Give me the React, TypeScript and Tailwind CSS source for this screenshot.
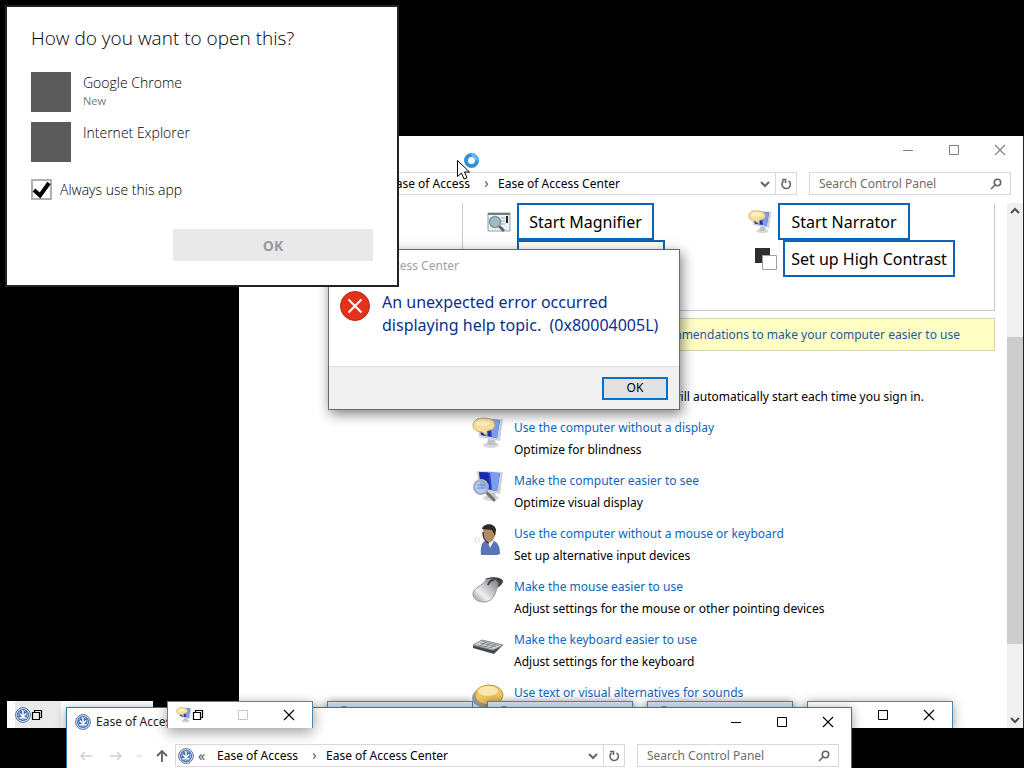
import type { ReactNode } from "react";

type SettingItem = {
  title: string;
  description: string;
  icon: ReactNode;
};

const EaseIcon = ({ className = "size-4" }: { className?: string }) => (
  <svg viewBox="0 0 16 16" className={className}>
    <circle cx="8" cy="8" r="7.4" fill="#dce7f5" stroke="#5b6f94" />
    <circle cx="8" cy="8" r="6" fill="#3c68b0" />
    <circle cx="8" cy="8" r="4.6" fill="none" stroke="#c8d9f2" strokeWidth="1" strokeDasharray="2 1.2" />
    <path d="M8 3.500v5.500M4.800 6.500L8 9.800l3.200-3.300M4.500 10.800h7" fill="none" stroke="#fff" strokeWidth="1.5" />
  </svg>
);

const MonitorBase = () => (
  <>
    <ellipse cx="19" cy="28" rx="8" ry="3" fill="#d6d8db" />
    <path d="M16 22l7 1 1 5h-9z" fill="#bfc3c8" />
    <path d="M5 1l26 1-3 22L7 20z" fill="#ccd2dc" />
    <path d="M7 2l21 1-3 18L9 18z" fill="#2440cc" />
    <path d="M18 2.500l10 .500-3 18-5-1z" fill="#7c9cf0" />
    <path d="M7 2l9 .500 2 17L9 18z" fill="#14239c" opacity=".7" />
  </>
);

const NarratorIcon = ({ className = "size-8" }: { className?: string }) => (
  <svg viewBox="0 0 32 32" className={className}>
    <MonitorBase />
    <path d="M12 1C5 1 1 4 1 8s4 7 9 7l5 4v-5c5-1 8-3 8-6 0-4-4-7-11-7z" fill="#f7df9c" stroke="#c9a656" />
    <ellipse cx="11" cy="6" rx="7" ry="3" fill="#fdf1c4" />
  </svg>
);

const SeeIcon = () => (
  <svg viewBox="0 0 32 32" className="size-8">
    <MonitorBase />
    <path d="M14 22l8 8" stroke="#77706c" strokeWidth="3" strokeLinecap="round" />
    <circle cx="9" cy="17" r="7" fill="#a9c3f2" fillOpacity=".85" stroke="#a6aebb" strokeWidth="2" />
    <path d="M5 15h8M5 18h7" stroke="#6d8fd0" />
  </svg>
);

const PersonIcon = () => (
  <svg viewBox="0 0 32 32" className="size-8">
    <path d="M9 32c-1-9 1-15 8-15 7 0 11 4 11 14-4 2-14 2-19 1z" fill="#5876b5" />
    <path d="M15 17l3 8 4-7z" fill="#e8edf5" />
    <path d="M11 5c2-4 11-4 12 1 1 6-1 12-5 13-5 0-7-7-7-14z" fill="#b08a62" />
    <path d="M10 6c1-6 13-7 14 1l-1 6-3-6z" fill="#302822" />
    <path d="M11 9c0 5 2 10 6 11" fill="none" stroke="#3f3a36" strokeWidth="1.6" />
    <path d="M8 15c-2 1-2 3 0 4M5 14c-2 2-2 4 0 6" fill="none" stroke="#c9c9c9" />
  </svg>
);

const MouseIcon = () => (
  <svg viewBox="0 0 32 32" className="size-8">
    <defs>
      <linearGradient id="mouse-body" x1="0" y1="1" x2="1" y2="0">
        <stop offset="0" stopColor="#8b8e91" />
        <stop offset=".35" stopColor="#f0f1f2" />
        <stop offset="1" stopColor="#77797c" />
      </linearGradient>
    </defs>
    <path d="M13 3c6-3 17-2 18 2 0 3-3 5-6 7z" fill="#3f4245" />
    <path d="M1 18c0-6 9-8 13-14 5-2 12 0 12 4-2 8-4 18-14 18C6 26 1 23 1 18z" fill="url(#mouse-body)" stroke="#96999c" />
    <path d="M16 9c1-3 3-5 6-5" fill="none" stroke="#3e4144" strokeWidth="2" />
  </svg>
);

const KeyboardIcon = () => (
  <svg viewBox="0 0 32 32" className="size-8">
    <path d="M1 16l9-5 21 5-9 9L1 19z" fill="#45484b" />
    <path d="M1 16l9-5 21 5-10 5z" fill="#d4d6d8" stroke="#8d9093" />
    <path d="M5 16l16 3M8 14l16 3.500M10 12.500l17 4M8 17l6-4M13 18l6-4M18 19l6-4" stroke="#7b7e81" strokeWidth=".8" />
  </svg>
);

const SoundIcon = () => (
  <svg viewBox="0 0 32 32" className="size-8">
    <ellipse cx="14" cy="16" rx="14" ry="10" fill="#9aa3b0" />
    <ellipse cx="17" cy="13" rx="14" ry="10" fill="#efc765" stroke="#bd9544" />
    <ellipse cx="16" cy="9" rx="10" ry="5" fill="#fae9ae" />
  </svg>
);

const MagnifierIcon = () => (
  <svg viewBox="0 0 24 22" className="h-[22px] w-6">
    <path d="M1 2h22v18H1z" fill="#eef3f5" stroke="#93a0a5" />
    <path d="M1 3h22" stroke="#6f7d83" strokeWidth="2" />
    <path d="M14 7h4M14 10h4M14 13h4" stroke="#9aa8ae" />
    <path d="M20 5v7" stroke="#222" strokeWidth="2" />
    <path d="M11 14l6 6" stroke="#5e6a6f" strokeWidth="3" />
    <circle cx="8" cy="11" r="5.500" fill="#9fbcc4" stroke="#84959b" strokeWidth="1.500" />
  </svg>
);

const ContrastIcon = () => (
  <svg viewBox="0 0 22 22" className="size-[22px]">
    <path d="M0 0h15v15H0z" fill="#2e2e2e" />
    <path d="M7.500 7.500h14v14h-14z" fill="#fff" stroke="#a0a0a0" />
  </svg>
);

const MinimizeGlyph = () => (
  <svg viewBox="0 0 12 12" className="size-3" stroke="currentColor">
    <path d="M1 6.500h10" />
  </svg>
);

const MaximizeGlyph = () => (
  <svg viewBox="0 0 12 12" className="size-3" fill="none" stroke="currentColor">
    <path d="M1.500 1.500h9v9h-9z" />
  </svg>
);

const CloseGlyph = () => (
  <svg viewBox="0 0 12 12" className="size-3" stroke="currentColor" strokeWidth="1.100">
    <path d="M1 1l10 10M11 1L1 11" />
  </svg>
);

const RestoreGlyph = () => (
  <svg viewBox="0 0 12 12" className="size-3" fill="none" stroke="currentColor" strokeWidth="1.200">
    <path d="M1.500 3.500h7v7h-7zM3.500 3.500v-2h7v7h-2" />
  </svg>
);

const ChevronDown = () => (
  <svg viewBox="0 0 10 10" className="size-[10px]" fill="none" stroke="currentColor" strokeWidth="2">
    <path d="M1 3l4 4 4-4" />
  </svg>
);

const WindowButtons = ({ tone }: { tone: string }) => (
  <div className={`flex ${tone}`}>
    <button type="button" aria-label="Minimize" className="flex h-7 w-[46px] items-center justify-center">
      <MinimizeGlyph />
    </button>
    <button type="button" aria-label="Maximize" className="flex h-7 w-[46px] items-center justify-center">
      <MaximizeGlyph />
    </button>
    <button type="button" aria-label="Close" className="flex h-7 w-[46px] items-center justify-center">
      <CloseGlyph />
    </button>
  </div>
);

const AddressBar = () => (
  <div className="flex h-[23px] min-w-0 flex-1 items-center border border-[#d9d9d9] bg-white text-[12px] text-black">
    <EaseIcon className="ml-[2px] size-4 shrink-0" />
    <span className="ml-1 w-[19px] text-[14px] text-[#555]">«</span>
    <a href="#ease" className="w-[86px] whitespace-nowrap">Ease of Access</a>
    <span className="w-[23px] pb-px text-center text-[14px] leading-4 text-[#555]">›</span>
    <a href="#center" className="flex-1 whitespace-nowrap">Ease of Access Center</a>
    <button type="button" aria-label="Recent locations" className="flex w-5 justify-center text-[#666]">
      <ChevronDown />
    </button>
    <button
      type="button"
      aria-label="Refresh"
      className="flex h-full w-[21px] items-center justify-center border-l border-[#d9d9d9] text-[#666]"
    >
      <svg viewBox="0 0 12 12" className="size-3" fill="none" stroke="currentColor" strokeWidth="1.600">
        <path d="M8.500 2.800A4.200 4.200 0 1 1 3.600 3M2 1.500h3.500V5" />
      </svg>
    </button>
  </div>
);

const SearchBox = () => (
  <label className="flex h-[23px] w-[202px] shrink-0 items-center border border-[#d9d9d9] bg-white pr-2 pl-[9px]">
    <input
      type="text"
      aria-label="Search Control Panel"
      placeholder="Search Control Panel"
      className="min-w-0 flex-1 bg-transparent text-[12px] outline-none placeholder:text-[#6d6d6d]"
    />
    <svg viewBox="0 0 12 12" className="size-3 shrink-0" fill="none" stroke="#666" strokeWidth="1.600">
      <circle cx="7.500" cy="4.500" r="3.200" />
      <path d="M5 7L1 11" />
    </svg>
  </label>
);

const settings: SettingItem[] = [
  {
    title: "Use the computer without a display",
    description: "Optimize for blindness",
    icon: <NarratorIcon />,
  },
  {
    title: "Make the computer easier to see",
    description: "Optimize visual display",
    icon: <SeeIcon />,
  },
  {
    title: "Use the computer without a mouse or keyboard",
    description: "Set up alternative input devices",
    icon: <PersonIcon />,
  },
  {
    title: "Make the mouse easier to use",
    description: "Adjust settings for the mouse or other pointing devices",
    icon: <MouseIcon />,
  },
  {
    title: "Make the keyboard easier to use",
    description: "Adjust settings for the keyboard",
    icon: <KeyboardIcon />,
  },
  {
    title: "Use text or visual alternatives for sounds",
    description: "Set up alternatives for sounds",
    icon: <SoundIcon />,
  },
];

const QUICK_BUTTON =
  "flex h-[37px] items-center justify-center whitespace-nowrap border-2 border-[#0a63b8] bg-white text-[16px] text-black";

const ControlPanelWindow = () => (
  <section className="absolute top-[136px] right-0 bottom-10 left-[239px] flex flex-col overflow-hidden border-r border-[#222] bg-white">
    <header className="flex h-9 shrink-0 justify-end">
      <WindowButtons tone="text-[#808080]" />
    </header>
    <div className="flex shrink-0 gap-3 pr-3 pl-[108px]">
      <AddressBar />
      <SearchBox />
    </div>
    <div className="mt-2 flex min-h-0 flex-1">
      <div className="w-[223px] shrink-0" />
      <main className="min-w-0 flex-1 pr-3">
        <div className="flex h-[108px] border-x border-b border-[#c8c8c8] pl-6">
          <div className="w-[261px]">
            <div className="flex items-center gap-[6px]">
              <MagnifierIcon />
              <button type="button" className={`${QUICK_BUTTON} w-[137px]`}>Start Magnifier</button>
            </div>
            <div className="flex pl-[30px]">
              <button type="button" className={`${QUICK_BUTTON} w-[148px]`}>Start Keyboard</button>
            </div>
          </div>
          <div>
            <div className="flex items-center gap-[6px]">
              <NarratorIcon className="size-6" />
              <button type="button" className={`${QUICK_BUTTON} w-[132px]`}>Start Narrator</button>
            </div>
            <div className="flex items-center gap-[6px] pl-[7px]">
              <ContrastIcon />
              <button type="button" className={`${QUICK_BUTTON} w-[172px]`}>Set up High Contrast</button>
            </div>
          </div>
        </div>
        <div className="mt-[7px] flex h-[33px] items-center justify-end border border-[#d5d5a8] bg-[#ffffc4] pr-[34px]">
          <a href="#recommendations" className="text-[12px] whitespace-nowrap text-[#1a5a9c]">
            Get recommendations to make your computer easier to use
          </a>
        </div>
        <p className="mt-9 pr-[71px] text-right text-[12px] leading-5 whitespace-nowrap text-black">
          When you select these settings, they will automatically start each time you sign in.
        </p>
        <ul className="mt-[10px] pl-[10px]">
          {settings.map((item) => (
            <li key={item.title} className="flex h-[53px] gap-[10px]">
              {item.icon}
              <div className="text-[12px] leading-[22px] whitespace-nowrap">
                <a href="#setting" className="block text-[#0b66c0]">{item.title}</a>
                <p className="text-black">{item.description}</p>
              </div>
            </li>
          ))}
        </ul>
      </main>
      <div className="flex w-4 shrink-0 flex-col bg-[#f0f0f0] text-[#505050]">
        <button type="button" aria-label="Scroll up" className="flex h-[17px] rotate-180 items-center justify-center">
          <ChevronDown />
        </button>
        <div className="flex flex-1 flex-col pt-[117px] pb-[67px]">
          <div className="flex-1 bg-[#cdcdcd]" />
        </div>
        <button type="button" aria-label="Scroll down" className="flex h-[17px] items-center justify-center">
          <ChevronDown />
        </button>
      </div>
    </div>
  </section>
);

const ErrorDialog = () => (
  <section
    role="alertdialog"
    className="absolute top-[249px] left-[328px] z-30 flex w-[352px] flex-col border border-[#6b6b6b] bg-white shadow-[2px_4px_12px_rgba(0,0,0,0.5)]"
  >
    <h2 className="h-[31px] pl-2 text-[12px] leading-[31px] text-[#a0a0a0]">Ease of Access Center</h2>
    <div className="flex h-[85px] gap-3 pt-[10px] pl-[11px]">
      <svg viewBox="0 0 30 30" className="size-[30px] shrink-0">
        <circle cx="15" cy="15" r="14.500" fill="#e2321a" stroke="#b32a17" />
        <path d="M8.500 8.500l13 13M21.500 8.500l-13 13" stroke="#fff" strokeWidth="2" />
      </svg>
      <p className="text-[16px] leading-[23px] whitespace-pre text-[#0b2f8c]">
        {"An unexpected error occurred\ndisplaying help topic.  (0x80004005L)"}
      </p>
    </div>
    <footer className="flex h-[43px] items-center justify-end border-t border-[#dfdfdf] bg-[#f0f0f0] pr-[11px]">
      <button type="button" className="h-[23px] w-[66px] border-2 border-[#0a70c8] bg-[#e1e1e1] text-[12px] leading-[18px] text-black">
        OK
      </button>
    </footer>
  </section>
);

const OpenWithDialog = () => (
  <section
    role="dialog"
    className="absolute top-[5px] left-[5px] z-40 w-[394px] border-2 border-[#222] bg-white px-6 pt-[15px] pb-6 font-['Open_Sans',sans-serif] text-black"
  >
    <h1 className="text-[19px] leading-8 font-light">How do you want to open this?</h1>
    <ul className="mt-[18px] flex flex-col gap-[10px]">
      <li>
        <button type="button" className="flex h-10 gap-3 text-left">
          <span className="size-10 bg-[#5a5a5a]" />
          <span>
            <span className="block text-[14px] leading-[22px] font-light">Google Chrome</span>
            <span className="block text-[11px] leading-[14px] text-[#777]">New</span>
          </span>
        </button>
      </li>
      <li>
        <button type="button" className="flex h-10 gap-3 text-left">
          <span className="size-10 bg-[#5a5a5a]" />
          <span className="text-[14px] leading-[22px] font-light">Internet Explorer</span>
        </button>
      </li>
    </ul>
    <label className="relative mt-[17px] flex h-[21px] items-center gap-2 text-[14px] font-light">
      <input type="checkbox" defaultChecked className="peer size-[21px] appearance-none border-2 border-[#b0b0b0] bg-white" />
      <svg viewBox="0 0 21 21" className="pointer-events-none invisible absolute left-0 size-[21px] peer-checked:visible" fill="none" stroke="#000" strokeWidth="4">
        <path d="M3 11l6 5.500L18 4" />
      </svg>
      Always use this app
    </label>
    <div className="mt-[29px] flex justify-end">
      <button type="button" disabled className="h-8 w-[200px] bg-[#e9e9e9] text-[14px] font-bold text-[#999]">
        OK
      </button>
    </div>
  </section>
);

const MINI = "relative flex h-[27px] w-[146px] border border-b-0 border-[#4d87b0]";

const MinimizedWindows = () => (
  <div className="absolute bottom-10 left-[7px] flex gap-[14px]">
    <div className="relative flex h-[27px] w-[146px] items-center bg-white">
      <div className="ml-2 flex h-full w-[46px] items-center bg-[#eaeaea]">
        <EaseIcon />
        <RestoreGlyph />
      </div>
    </div>
    <div className={`${MINI} z-20 items-center bg-white pl-2 shadow-[0_4px_14px_rgba(0,0,0,0.4)]`}>
      <NarratorIcon className="size-4" />
      <button type="button" aria-label="Restore"><RestoreGlyph /></button>
      <button type="button" disabled aria-label="Maximize" className="ml-[33px] text-[#c8c8c8]"><MaximizeGlyph /></button>
      <button type="button" aria-label="Close" className="ml-[34px]"><CloseGlyph /></button>
    </div>
    {[1, 2, 3].map((n) => (
      <div key={n} className={`${MINI} items-start bg-[#cfe0f0] pt-1 pl-2 shadow-[0_0_8px_rgba(0,0,0,0.4)]`}>
        <EaseIcon />
      </div>
    ))}
    <div className={`${MINI} items-center bg-white pl-2 shadow-[0_2px_12px_rgba(0,0,0,0.4)]`}>
      <EaseIcon />
      <button type="button" aria-label="Maximize" className="ml-[45px]"><MaximizeGlyph /></button>
      <button type="button" aria-label="Close" className="ml-[34px]"><CloseGlyph /></button>
    </div>
  </div>
);

const FrontWindow = () => (
  <section className="absolute right-[172px] bottom-0 left-[66px] z-10 h-[61px] border border-b-0 border-[#2c79ae] bg-white shadow-[0_2px_10px_rgba(0,0,0,0.4)]">
    <header className="flex h-9 justify-between">
      <div className="flex h-7 items-center gap-[5px] pl-2 text-[12px] text-[#222]">
        <EaseIcon />
        Ease of Access Center
      </div>
      <WindowButtons tone="text-black" />
    </header>
    <div className="flex pr-3">
      <nav className="flex h-[23px] w-[108px] shrink-0 items-center pl-3">
        <button type="button" aria-label="Back" className="w-[30px] text-[#d0d0d0]">
          <svg viewBox="0 0 14 12" className="h-3 w-[14px]" fill="none" stroke="currentColor" strokeWidth="1.500">
            <path d="M13 6H2M6 2L2 6l4 4" />
          </svg>
        </button>
        <button type="button" aria-label="Forward" className="w-[26px] text-[#d0d0d0]">
          <svg viewBox="0 0 14 12" className="h-3 w-[14px]" fill="none" stroke="currentColor" strokeWidth="1.500">
            <path d="M1 6h11M8 2l4 4-4 4" />
          </svg>
        </button>
        <button type="button" aria-label="History" className="w-5 text-[#d0d0d0]">
          <svg viewBox="0 0 8 6" className="h-[6px] w-2" fill="none" stroke="currentColor">
            <path d="M2 2l2 2 2-2" />
          </svg>
        </button>
        <button type="button" aria-label="Up" className="text-[#606060]">
          <svg viewBox="0 0 14 14" className="size-[14px]" fill="none" stroke="currentColor" strokeWidth="1.800">
            <path d="M7 13V2M2 7l5-5 5 5" />
          </svg>
        </button>
      </nav>
      <div className="flex min-w-0 flex-1 gap-3">
        <AddressBar />
        <SearchBox />
      </div>
    </div>
  </section>
);

const BusyCursor = () => (
  <svg viewBox="0 0 24 28" className="pointer-events-none absolute top-[152px] left-[456px] z-50 h-7 w-6">
    <circle cx="15.500" cy="8.500" r="5.500" fill="#fff" stroke="#2f93dc" strokeWidth="4" />
    <path d="M15.500 3a5.500 5.500 0 0 1 5.500 5.500" fill="none" stroke="#69b8ee" strokeWidth="4" />
    <path d="M1.500 8.500v16l4-3.500 2.500 6 3-1.200-2.500-5.800h5z" fill="#fff" stroke="#000" />
  </svg>
);

const App = () => {
  return (
    <div className="relative h-screen overflow-hidden bg-black font-['Noto_Sans',sans-serif]">
      <ControlPanelWindow />
      <MinimizedWindows />
      <FrontWindow />
      <ErrorDialog />
      <OpenWithDialog />
      <BusyCursor />
    </div>
  );
};

export default App;
